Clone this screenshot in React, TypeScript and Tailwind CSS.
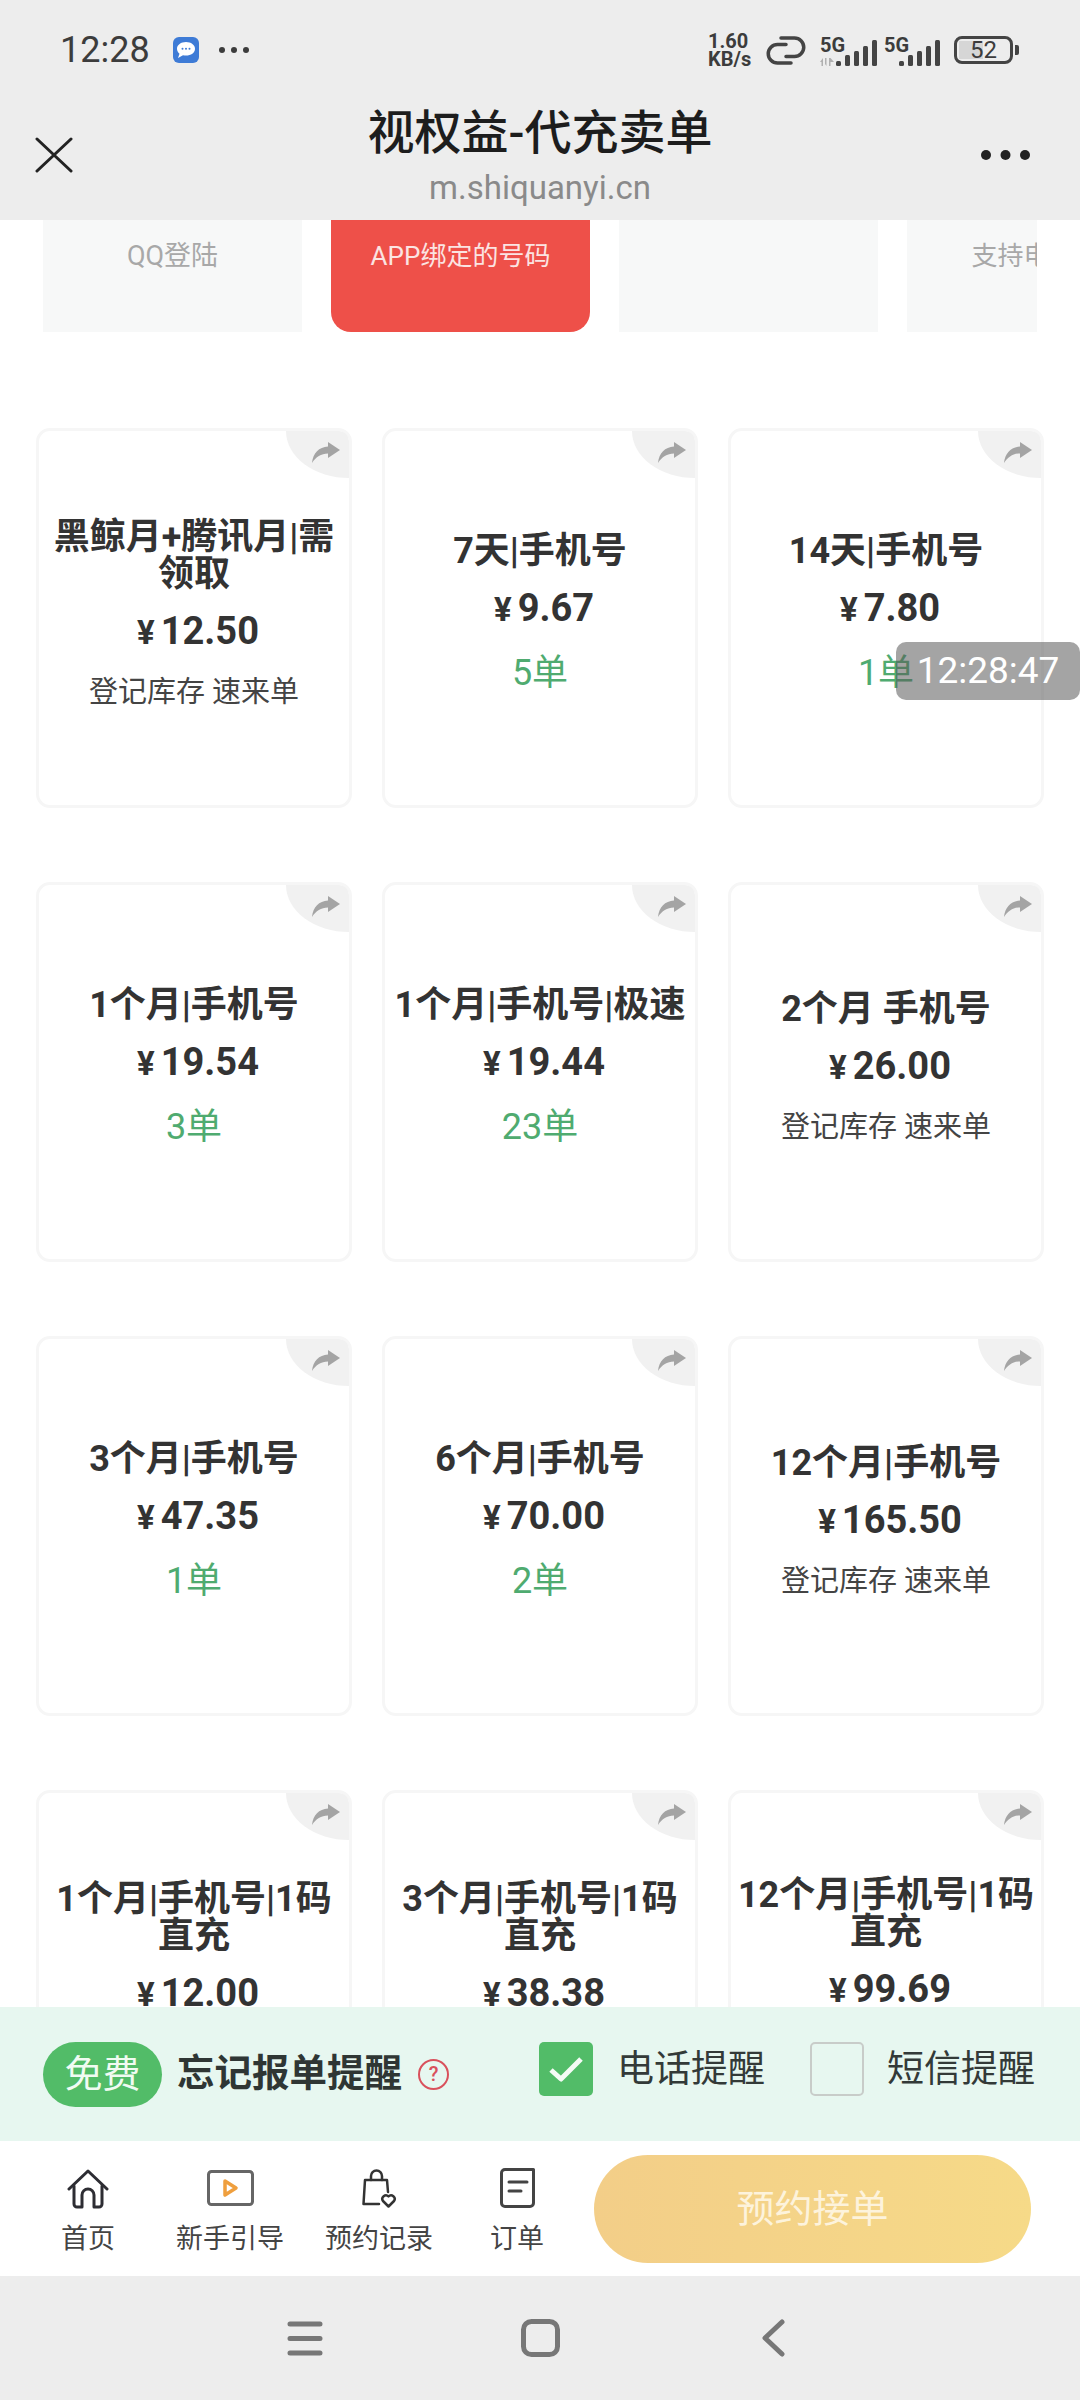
const plans = [
  { title: '黑鲸月+腾讯月|需领取', price: '12.50', note: '登记库存 速来单' },
  { title: '7天|手机号', price: '9.67', count: '5单' },
  { title: '14天|手机号', price: '7.80', count: '1单' },
  { title: '1个月|手机号', price: '19.54', count: '3单' },
  { title: '1个月|手机号|极速', price: '19.44', count: '23单' },
  { title: '2个月 手机号', price: '26.00', note: '登记库存 速来单' },
  { title: '3个月|手机号', price: '47.35', count: '1单' },
  { title: '6个月|手机号', price: '70.00', count: '2单' },
  { title: '12个月|手机号', price: '165.50', note: '登记库存 速来单' },
  { title: '1个月|手机号|1码直充', price: '12.00', note: '登记库存 速来单' },
  { title: '3个月|手机号|1码直充', price: '38.38', note: '登记库存 速来单' },
  { title: '12个月|手机号|1码直充', price: '99.69', count: '1单' },
]

const tabs = [
  { label: '首页', space: 'ml-[61px]', icon: <HomeIcon /> },
  { label: '新手引导', space: 'ml-[61px]', icon: <GuideIcon /> },
  { label: '预约记录', space: 'ml-[41px]', icon: <BagIcon /> },
  { label: '订单', space: 'ml-[57px]', icon: <OrderIcon /> },
]

function HomeIcon() {
  return (
    <svg width="42" height="41" viewBox="0 0 42 41" fill="none" stroke="#2d2d33" strokeWidth="3" strokeLinecap="round" strokeLinejoin="round">
      <path d="M2 21 21 3l19 18" />
      <path d="M7 18v18a3 3 0 0 0 3 3h5V27a6 6 0 0 1 12 0v12h5a3 3 0 0 0 3-3V18" />
    </svg>
  )
}

function GuideIcon() {
  return (
    <svg width="47" height="36" viewBox="0 0 47 36" fill="none">
      <rect x="1.5" y="1.5" width="44" height="33" rx="3" stroke="#666" strokeWidth="3" />
      <path d="M18 11l11 7-11 7z" stroke="#ef9f3e" strokeWidth="3.5" strokeLinejoin="round" />
    </svg>
  )
}

function BagIcon() {
  return (
    <svg width="35" height="40" viewBox="0 0 35 40" fill="none" stroke="#333" strokeWidth="2.5" strokeLinecap="round" strokeLinejoin="round">
      <path d="M17 36H1.500L3 12h22l1 12" />
      <path d="M9 12V8a5.500 5.500 0 0 1 11 0v4" />
      <path d="M26.500 38.500l-5.500-5.500a3.600 3.600 0 0 1 5.500-4.600 3.600 3.600 0 0 1 5.500 4.600z" />
    </svg>
  )
}

function OrderIcon() {
  return (
    <svg width="35" height="40" viewBox="0 0 35 40" fill="none" stroke="#444" strokeWidth="3" strokeLinecap="round" strokeLinejoin="round">
      <path d="M33.500 1.500H5a3.500 3.500 0 0 0-3.500 3.500v30A3.500 3.500 0 0 0 5 38.500h25a3.500 3.500 0 0 0 3.500-3.500V1.500z" />
      <path d="M9 14h18M9 23h12" />
    </svg>
  )
}

function ShareIcon() {
  return (
    <svg width="28" height="21" viewBox="0 0 28 21" fill="#a4a4a4">
      <path d="M16 0l12 8-12 8v-4.500C9 11.500 4 15 0 21 1 11 7 5 16 4.500z" />
    </svg>
  )
}

function SignalBars() {
  return (
    <svg width="41" height="26" viewBox="0 0 41 26" fill="#444">
      <rect x="0" y="21" width="5" height="5" rx="1.500" />
      <rect x="9" y="15" width="5" height="11" rx="1.500" />
      <rect x="18" y="11" width="5" height="15" rx="1.500" />
      <rect x="27" y="6" width="5" height="20" rx="1.500" />
      <rect x="36" y="0" width="5" height="26" rx="1.500" />
    </svg>
  )
}

function StatusBar() {
  return (
    <div className="flex h-[100px] items-center justify-between pl-[60px] pr-[61px] text-[#3c3c3c]">
      <div className="flex items-center">
        <span className="text-[36px] leading-none">12:28</span>
        <div className="ml-[23px] flex h-[26px] w-[26px] items-center justify-center rounded-[6px] bg-[#3e7bd6]">
          <svg width="20" height="18" viewBox="0 0 20 18">
            <path d="M10 1c5 0 9 2.800 9 6.800s-4 6.800-9 6.800c-1 0-2-.1-3-.4L2 17l1.500-4.300C2 11.500 1 9.800 1 7.800 1 3.800 5 1 10 1z" fill="#fff" />
            <circle cx="6.500" cy="7.800" r="1" fill="#3e7bd6" />
            <circle cx="10" cy="7.800" r="1" fill="#3e7bd6" />
            <circle cx="13.500" cy="7.800" r="1" fill="#3e7bd6" />
          </svg>
        </div>
        <svg className="ml-[20px]" width="30" height="6" viewBox="0 0 30 6" fill="#3c3c3c">
          <circle cx="3" cy="3" r="3" />
          <circle cx="15" cy="3" r="3" />
          <circle cx="27" cy="3" r="3" />
        </svg>
      </div>
      <div className="flex items-center">
        <div className="flex w-[48px] flex-col text-[20px] font-bold leading-[18px]">
          <span>1.60</span>
          <span>KB/s</span>
        </div>
        <svg className="ml-[10px]" width="40" height="29" viewBox="0 0 40 29" fill="none" stroke="#444" strokeWidth="3.500" strokeLinecap="round">
          <path d="M20 8.500H11.500a9.250 9.250 0 0 0 0 18.500H25" />
          <path d="M20 20.500h8.500a9.250 9.250 0 0 0 0-18.500H15" />
        </svg>
        <div className="ml-[14px] flex items-end">
          <div className="flex w-[26px] flex-col">
            <span className="text-[20px] font-bold leading-[20px]">5G</span>
            <svg className="mt-[2px]" width="15" height="9" viewBox="0 0 15 9" fill="#b0b0b0">
              <path d="M0 5l3-4v8H1.500V5zM5 1h1.500v8L5 7zM9 1h1.500l3.500 4h-3.500v4H9z" />
            </svg>
          </div>
          <div className="-ml-[10px]">
            <SignalBars />
          </div>
        </div>
        <div className="ml-[7px] flex items-end">
          <span className="mb-[11px] w-[24px] text-[20px] font-bold leading-[20px]">5G</span>
          <div className="-ml-[9px]">
            <SignalBars />
          </div>
        </div>
        <div className="relative ml-[14px] flex h-[28px] w-[59px] items-center justify-center overflow-hidden rounded-[8px] border-[3px] border-[#444]">
          <div className="absolute inset-y-[2px] left-[2px] w-[24px] bg-[#d6d6d6]" />
          <span className="relative text-[24px] leading-none">52</span>
        </div>
        <div className="ml-[2px] h-[10px] w-[4px] rounded-r-[2px] bg-[#444]" />
      </div>
    </div>
  )
}

function Header() {
  return (
    <div className="grid h-[120px] grid-cols-[1fr_auto_1fr] items-center pb-[10px] pt-[5px]">
      <svg className="mb-[5px] ml-[35px]" width="38" height="36" viewBox="0 0 38 36" fill="none" stroke="#222" strokeWidth="3" strokeLinecap="round">
        <path d="M2 2l34 32M36 2L2 34" />
      </svg>
      <div className="flex flex-col items-center gap-[5px]">
        <span className="text-[47px] font-medium leading-[56px] text-[#1d1d1d]">视权益-代充卖单</span>
        <span className="text-[33px] leading-[44px] text-[#8a8a8a]">m.shiquanyi.cn</span>
      </div>
      <svg className="mb-[5px] mr-[50px] justify-self-end" width="49" height="10" viewBox="0 0 49 10" fill="#222">
        <circle cx="5" cy="5" r="5" />
        <circle cx="24.500" cy="5" r="5" />
        <circle cx="44" cy="5" r="5" />
      </svg>
    </div>
  )
}

function TypeStrip() {
  return (
    <div className="mx-[43px] flex h-[112px] gap-[29px] overflow-hidden leading-[72px]">
      <div className="w-[259px] shrink-0 bg-[#f7f8f8] text-center text-[27px] text-[#a8a8a8]">QQ登陆</div>
      <div className="w-[259px] shrink-0 rounded-b-[20px] bg-[#ee5049] text-center text-[26px] text-[#fbe4e2]">APP绑定的号码</div>
      <div className="w-[259px] shrink-0 bg-[#f7f8f8]" />
      <div className="w-[259px] shrink-0 bg-[#f7f8f8] text-center text-[26px] text-[#a8a8a8]">支持电信卡</div>
    </div>
  )
}

function PlanCard({ plan }: { plan: (typeof plans)[number] }) {
  return (
    <div className="relative flex h-[380px] flex-col justify-center rounded-[14px] border-[3px] border-[#f6f6f6] bg-white px-[6px] pb-[8px] text-center">
      <div className="absolute right-0 top-0 flex h-[47px] w-[63px] items-start justify-end rounded-bl-[63px_47px] rounded-tr-[10px] bg-[#f1f1f1] pr-[9px] pt-[11px]">
        <ShareIcon />
      </div>
      <div className="text-[36px] font-bold leading-[37px] text-[#333]">{plan.title}</div>
      <div className="mt-[15px] pl-[8px] text-[38px] font-bold leading-[46px] text-[#333]">
        <span className="mr-[6px] text-[33px]">¥</span>
        {plan.price}
      </div>
      {plan.count ? (
        <div className="mt-[18px] text-[36px] leading-[44px] text-[#4fab70]">{plan.count}</div>
      ) : (
        <div className="mt-[18px] text-[29px] leading-[36px] text-[#444]">{plan.note}</div>
      )}
    </div>
  )
}

function ReminderBar() {
  return (
    <div className="flex h-[134px] shrink-0 items-center bg-[#e7f7f0] pl-[43px]">
      <div className="flex h-[65px] w-[119px] items-center justify-center rounded-full bg-[#52bc68] text-[38px] text-[#f0fbf2]">免费</div>
      <span className="ml-[15px] text-[37.500px] font-bold leading-none text-[#2f3634]">忘记报单提醒</span>
      <div className="ml-[16px] flex h-[31px] w-[31px] items-center justify-center rounded-full border-2 border-[#d9515c] text-[20px] font-medium leading-none text-[#d9515c]">?</div>
      <div className="mb-[10px] ml-[90px] flex items-center">
        <div className="flex h-[54px] w-[54px] items-center justify-center rounded-[5px] bg-[#52bc68]">
          <svg width="36" height="28" viewBox="0 0 36 28" fill="none" stroke="#f4fbf5" strokeWidth="5" strokeLinejoin="round">
            <path d="M3 15l10 9L33 4" />
          </svg>
        </div>
        <span className="ml-[24px] text-[37px] leading-none text-[#333a38]">电话提醒</span>
        <div className="ml-[45px] h-[54px] w-[54px] rounded-[5px] border-2 border-[#c8ccc9]" />
        <span className="ml-[23px] text-[37px] leading-none text-[#333a38]">短信提醒</span>
      </div>
    </div>
  )
}

function TabBar() {
  return (
    <div className="flex h-[135px] shrink-0 bg-white">
      {tabs.map((tab) => (
        <div key={tab.label} className={`${tab.space} flex flex-col items-center pt-[25px]`}>
          <div className="flex h-[44px] items-center justify-center">{tab.icon}</div>
          <span className="mt-[14px] text-[27px] leading-[30px] text-[#444]">{tab.label}</span>
        </div>
      ))}
      <button className="ml-auto mr-[49px] mt-[14px] h-[108px] w-[437px] rounded-full bg-gradient-to-r from-[#f3ce88] to-[#f6da88] text-[38px] text-[#fdf3dc]">
        预约接单
      </button>
    </div>
  )
}

function NavBar() {
  return (
    <div className="flex h-[124px] shrink-0 items-center gap-[198px] bg-[#ededed] pl-[287px]">
      <svg width="36" height="35" viewBox="0 0 36 35" fill="none" stroke="#777" strokeWidth="5" strokeLinecap="round">
        <path d="M3 3h30M3 17.500h30M3 32h30" />
      </svg>
      <svg width="39" height="38" viewBox="0 0 39 38" fill="none" stroke="#777" strokeWidth="5">
        <rect x="2.500" y="2.500" width="34" height="33" rx="8" />
      </svg>
      <svg className="ml-[4px]" width="23" height="38" viewBox="0 0 23 38" fill="none" stroke="#777" strokeWidth="5" strokeLinecap="round" strokeLinejoin="round">
        <path d="M20 3 3 19l17 16" />
      </svg>
    </div>
  )
}

export default function App() {
  return (
    <div className="relative flex h-[2400px] w-[1080px] flex-col overflow-hidden bg-white font-['Roboto','Noto_Sans_CJK_SC',sans-serif]">
      <div className="shrink-0 bg-[#ededed]">
        <StatusBar />
        <Header />
      </div>
      <div className="min-h-0 flex-1 overflow-hidden">
        <TypeStrip />
        <div className="grid grid-cols-[316px_316px_316px] gap-x-[30px] gap-y-[74px] pl-[36px] pt-[96px]">
          {plans.map((plan) => (
            <PlanCard key={plan.title} plan={plan} />
          ))}
        </div>
      </div>
      <ReminderBar />
      <TabBar />
      <NavBar />
      <div className="absolute right-0 top-[642px] flex h-[58px] w-[184px] items-center justify-center rounded-[10px] bg-[#5a5a5a]/55 text-[37px] text-white">
        12:28:47
      </div>
    </div>
  )
}
